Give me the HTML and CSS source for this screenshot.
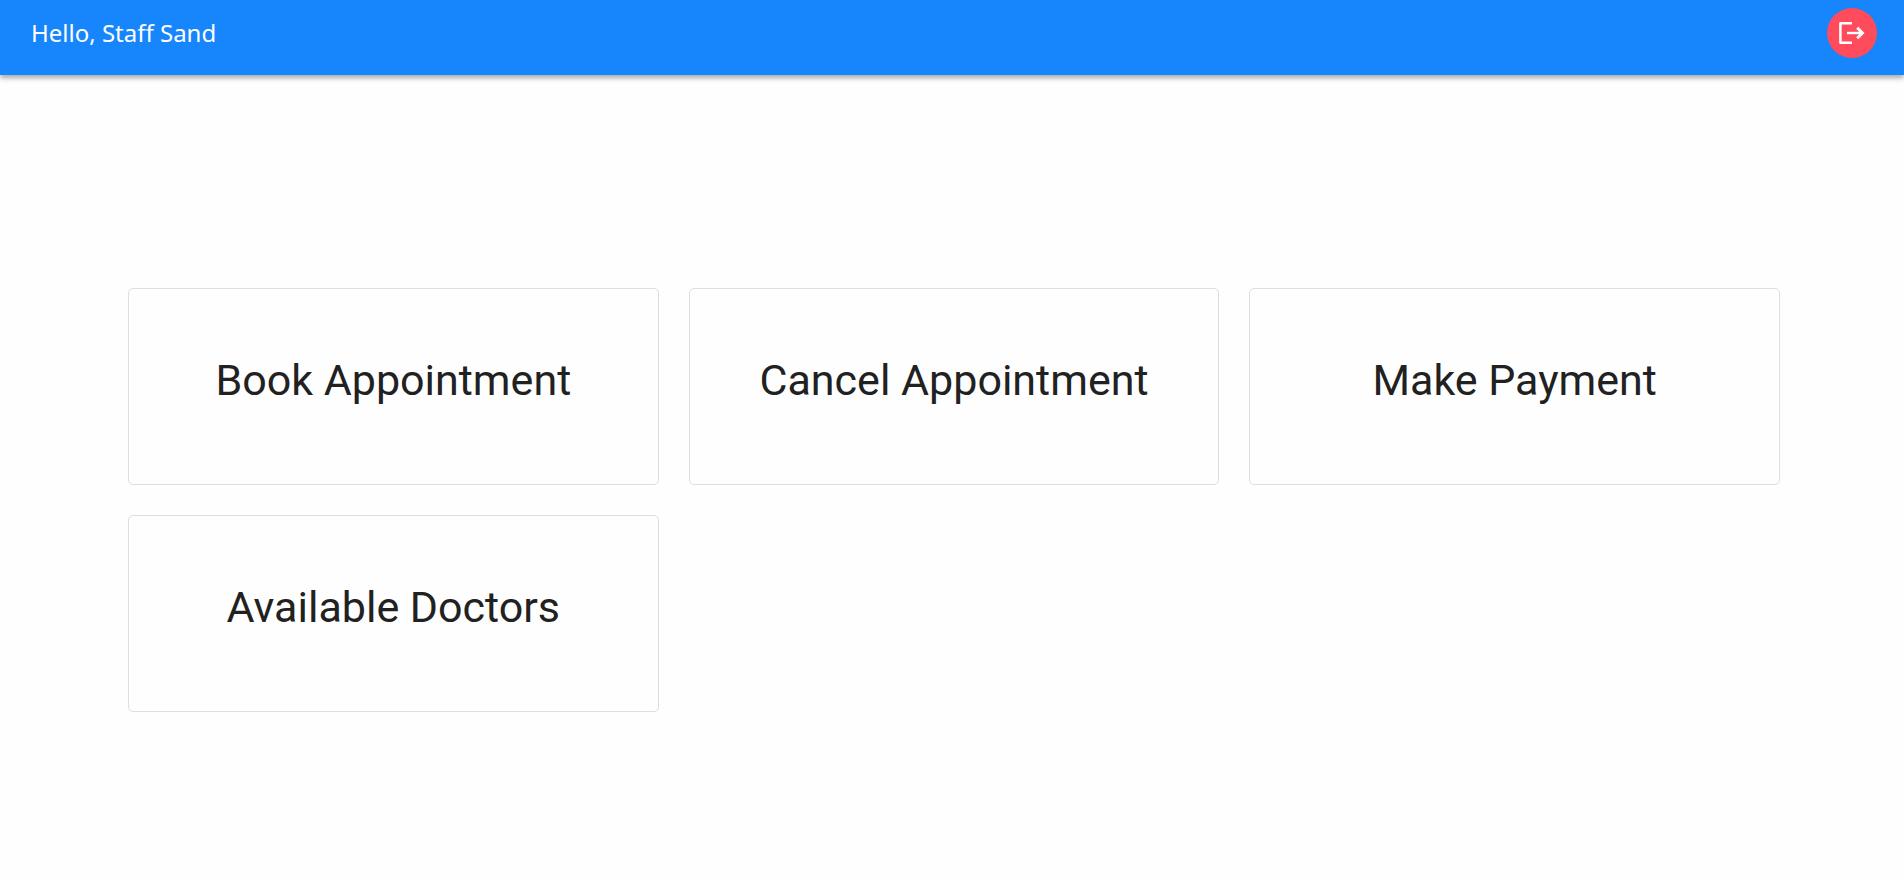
FILE: index.html
```html
<!DOCTYPE html>
<html lang="en">
<head>
<meta charset="utf-8">
<title>Staff Dashboard</title>
<link rel="stylesheet" href="styles.css">
</head>
<body>
<header class="topbar">
  <span class="greeting">Hello, Staff Sand</span>
  <button class="logout" type="button" aria-label="Log out">
    <svg class="logout-icon" viewBox="0 0 26 22" fill="none" stroke="currentColor" aria-hidden="true">
      <path stroke-width="2.5" stroke-linejoin="round" d="M13 1.2H1.4V20.8H13"/>
      <path stroke-width="2.4" d="M8 11H24"/>
      <path stroke-width="3" d="M18.2 5.8L23.4 11L18.2 16.2"/>
    </svg>
  </button>
</header>
<main class="content">
  <nav class="grid">
    <a class="card" href="#book">Book Appointment</a>
    <a class="card" href="#cancel">Cancel Appointment</a>
    <a class="card" href="#payment">Make Payment</a>
    <a class="card" href="#doctors">Available Doctors</a>
  </nav>
</main>
</body>
</html>
```
FILE: styles.css
```css
* { box-sizing: border-box; }
body {
  margin: 0;
  min-height: 100vh;
  display: flex;
  flex-direction: column;
  background: #fefefe;
  font-family: Roboto, sans-serif;
}
.topbar {
  display: flex;
  justify-content: space-between;
  align-items: flex-start;
  padding: 8px 27px 17px 31px;
  background: #1785fb;
  box-shadow: 0 3px 5px rgba(0, 0, 0, 0.34);
}
.greeting {
  font-family: "Noto Sans", sans-serif;
  font-size: 24px;
  line-height: 50px;
  color: #fff;
}
.logout {
  display: flex;
  align-items: center;
  justify-content: center;
  width: 50px;
  height: 50px;
  padding: 0;
  border: 0;
  border-radius: 50%;
  background: #ff4b5c;
  color: #fff;
}
.logout-icon { width: 26px; height: 22px; }
.content {
  flex: 1;
  display: flex;
  flex-direction: column;
  justify-content: center;
  padding: 47px 124px 0 128px;
}
.grid {
  display: grid;
  grid-template-columns: repeat(3, 1fr);
  gap: 30px;
}
.card {
  padding: 65px 16px 78px;
  border: 1px solid #dedede;
  border-radius: 5px;
  color: #212121;
  font-size: 43px;
  line-height: 52px;
  text-align: center;
  text-decoration: none;
}
```
